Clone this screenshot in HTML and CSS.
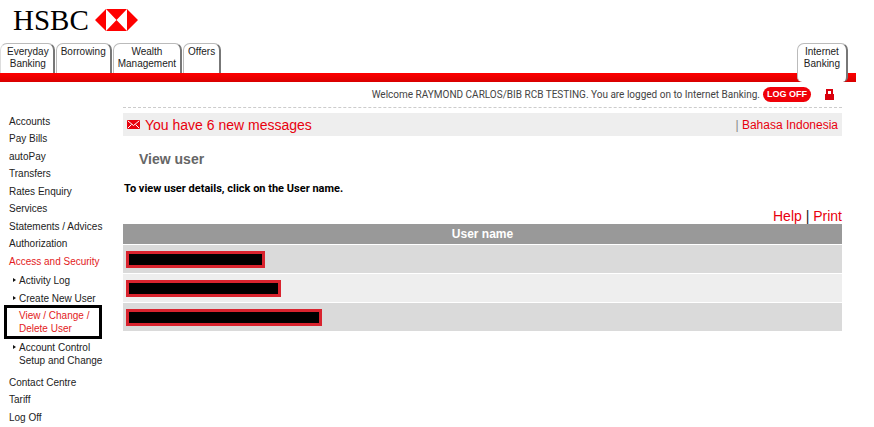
FILE: index.html
```html
<!DOCTYPE html>
<html lang="en">
<head>
    <meta charset="UTF-8">
    <meta name="viewport" content="width=device-width, initial-scale=1.0">
    <title>View user - HSBC Internet Banking</title>
    <link rel="stylesheet" href="styles.css">
</head>
<body>
    <header class="header">
        <a class="logo" href="#">
            <span>HSBC</span>
            <svg width="43" height="22" viewBox="0 0 43 22">
                <path fill="#f00" d="M0 11 11 0V22ZM43 11 32 0V22ZM11 0H32L21.500 11ZM11 22H32L21.500 11Z"/>
            </svg>
        </a>
        <nav class="tabs">
            <a class="tab tab-first" href="#">Everyday<br>Banking</a>
            <a class="tab" href="#">Borrowing</a>
            <a class="tab" href="#">Wealth<br>Management</a>
            <a class="tab" href="#">Offers</a>
            <a class="tab tab-active" href="#">Internet<br>Banking</a>
        </nav>
    </header>

    <div class="page">
        <nav class="sidebar">
            <ul class="menu">
                <li><a href="#">Accounts</a></li>
                <li><a href="#">Pay Bills</a></li>
                <li><a href="#">autoPay</a></li>
                <li><a href="#">Transfers</a></li>
                <li><a href="#">Rates Enquiry</a></li>
                <li><a href="#">Services</a></li>
                <li><a href="#">Statements / Advices</a></li>
                <li><a href="#">Authorization</a></li>
                <li><a class="selected" href="#">Access and Security</a></li>
            </ul>
            <ul class="submenu">
                <li><a href="#">Activity Log</a></li>
                <li><a href="#">Create New User</a></li>
                <li class="current"><a class="selected" href="#">View / Change /<br>Delete User</a></li>
                <li><a href="#">Account Control<br>Setup and Change</a></li>
            </ul>
            <ul class="menu">
                <li><a href="#">Contact Centre</a></li>
                <li><a href="#">Tariff</a></li>
                <li><a href="#">Log Off</a></li>
            </ul>
        </nav>

        <main class="content">
            <div class="welcome">
                <span>Welcome RAYMOND CARLOS/BIB RCB TESTING. You are logged on to Internet Banking.</span>
                <button type="button" class="logoff">LOG OFF</button>
                <svg width="9" height="11" viewBox="0 0 9 11">
                    <path fill="none" stroke="#d9000d" stroke-width="2" d="M2 6V1H7V6"/>
                    <path fill="#d9000d" d="M0 5H9V11H0Z"/>
                </svg>
            </div>

            <div class="messages">
                <svg width="13" height="9" viewBox="0 0 13 9">
                    <rect width="13" height="9" rx="1" fill="#e8000d"/>
                    <path fill="none" stroke="#fff" d="M1 1 6.500 5.500 12 1M1 8 4.500 4.500M12 8 8.500 4.500"/>
                </svg>
                <a class="inbox" href="#">You have 6 new messages</a>
                <span class="language"><span class="divider">|</span> <a href="#">Bahasa Indonesia</a></span>
            </div>

            <h1>View user</h1>
            <p class="intro">To view user details, click on the User name.</p>
            <div class="tools"><a href="#">Help</a> | <a href="#">Print</a></div>

            <table class="users">
                <thead>
                    <tr><th>User name</th></tr>
                </thead>
                <tbody>
                    <tr><td><div class="masked masked-short"></div></td></tr>
                    <tr><td><div class="masked masked-medium"></div></td></tr>
                    <tr><td><div class="masked masked-long"></div></td></tr>
                </tbody>
            </table>
        </main>
    </div>
</body>
</html>
```

FILE: styles.css
```css
body {
    font-family: "Liberation Sans", Arial, sans-serif;
    font-size: 10px;
    line-height: 12px;
    margin: 0;
    color: #222;
    background-color: #fff;
}
a {
    color: inherit;
    text-decoration: none;
}
ul {
    list-style: none;
    margin: 0;
    padding: 0;
}

/* header */
.header {
    margin-right: 18px;
}
.logo {
    display: flex;
    align-items: center;
    gap: 6px;
    height: 35px;
    padding: 2px 0 6px 13px;
    font-family: "Liberation Serif", "Times New Roman", serif;
    font-size: 29px;
    line-height: 34px;
    color: #000;
}
.tabs {
    display: flex;
    height: 39px;
    background: linear-gradient(#f00, #d80000) 0 100% / 100% 9px no-repeat;
}
.tab {
    box-sizing: border-box;
    height: 30px;
    margin-right: 1px;
    padding: 2px 4px 0;
    border: 1px solid #bbb;
    border-right: 2px solid #777;
    border-bottom: 0;
    border-radius: 7px 7px 0 0;
    background-color: #fff;
    text-align: center;
}
.tab-first {
    padding-left: 6px;
    border-left-color: #ddd;
}
.tab-active {
    height: 39px;
    margin-left: auto;
    margin-right: 8px;
    padding: 2px 6px 0;
    border-radius: 7px 7px 5px 5px;
}

/* left menu */
.page {
    display: flex;
    margin-right: 32px;
}
.sidebar {
    flex: 0 0 107px;
    margin-right: 12px;
    padding: 31px 0 0 4px;
}
.menu li {
    padding-left: 5px;
    line-height: 17px;
}
.menu li:nth-child(even) {
    padding-bottom: 1px;
}
.selected {
    color: #e31b23;
}
.submenu {
    padding: 1px 0 5px;
    line-height: 13px;
}
.submenu li {
    position: relative;
    padding: 3px 0 2px 15px;
}
.submenu li:not(.current)::before {
    content: "";
    position: absolute;
    left: 9px;
    top: 7px;
    border: 2px solid transparent;
    border-left: 3px solid #111;
    border-right: 0;
}
.submenu .current {
    box-sizing: border-box;
    width: 98px;
    margin: -2px 0 -1px;
    padding: 1px 0 1px 12px;
    border: 3px solid #000;
}

/* main column */
.content {
    flex: 1;
    min-width: 0;
}
.welcome {
    display: flex;
    justify-content: flex-end;
    align-items: center;
    height: 25px;
    padding-right: 8px;
    border-bottom: 1px dashed #ccc;
    font-family: Roboto, Arial, sans-serif;
    color: #444;
}
.logoff {
    margin: 0 14px 0 3px;
    padding: 1px 4px;
    border: 0;
    border-radius: 8px;
    background-color: #f00008;
    color: #fff;
    font-family: "Liberation Sans", Arial, sans-serif;
    font-size: 9px;
    font-weight: bold;
    line-height: 13px;
    cursor: pointer;
}
.messages {
    display: flex;
    align-items: center;
    height: 23px;
    margin-top: 5px;
    padding: 0 4px;
    background-color: #eee;
    color: #e8000d;
}
.inbox {
    margin-left: 5px;
    font-size: 14px;
}
.language {
    margin-left: auto;
    font-size: 12px;
}
.divider {
    color: #888;
}
h1 {
    margin: 14px 0 0 16px;
    font-size: 14px;
    line-height: 18px;
    color: #666;
}
.intro {
    margin: 15px 0 13px 1px;
    font-family: Roboto, Arial, sans-serif;
    font-size: 11px;
    font-weight: bold;
    color: #000;
}
.tools {
    font-size: 14px;
    line-height: 16px;
    text-align: right;
}
.tools a {
    color: #e8000d;
}

.users {
    width: 100%;
    border-collapse: collapse;
}
.users th {
    height: 20px;
    padding: 0;
    background-color: #999;
    color: #fff;
    font-size: 12px;
    line-height: 19px;
}
.users td {
    height: 28px;
    padding: 0 3px;
    border-top: 1px solid #fff;
    background-color: #dadada;
}
.users tr:nth-child(even) td {
    background-color: #eee;
}
.masked {
    box-sizing: border-box;
    height: 17px;
    border: 3px solid #d9232e;
    background-color: #000;
}
.masked-short {
    width: 139px;
}
.masked-medium {
    width: 155px;
}
.masked-long {
    width: 196px;
}
```
